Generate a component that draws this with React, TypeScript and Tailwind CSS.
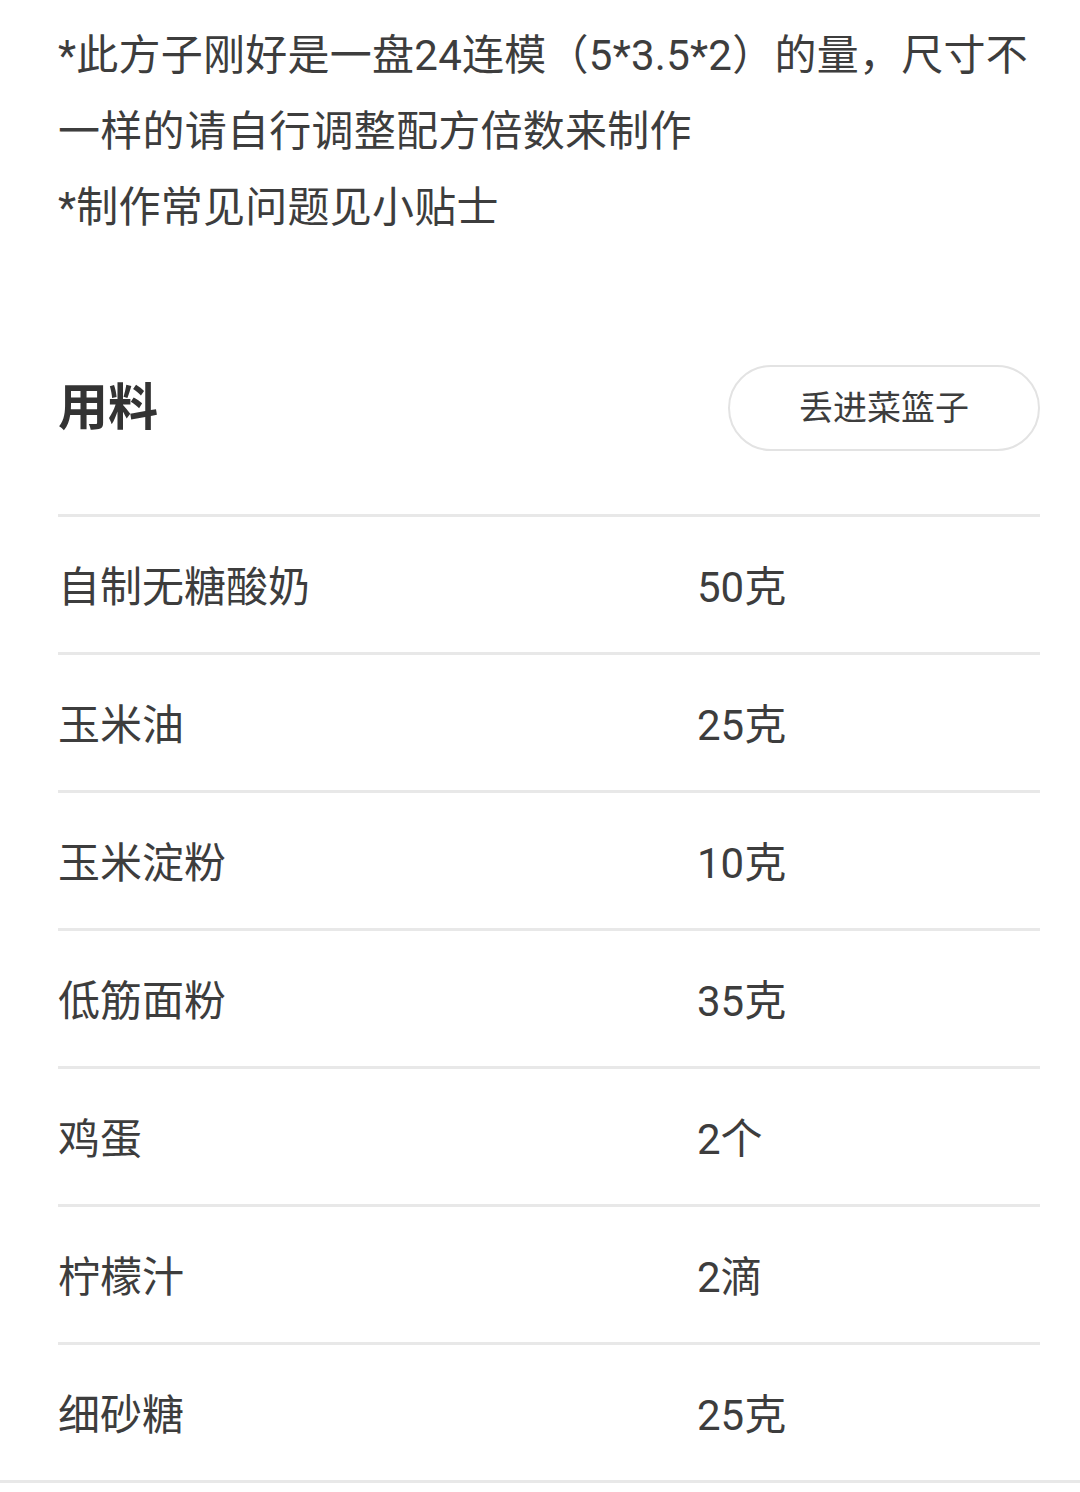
const ingredients = [
  { name: '自制无糖酸奶', amount: '50克' },
  { name: '玉米油', amount: '25克' },
  { name: '玉米淀粉', amount: '10克' },
  { name: '低筋面粉', amount: '35克' },
  { name: '鸡蛋', amount: '2个' },
  { name: '柠檬汁', amount: '2滴' },
  { name: '细砂糖', amount: '25克' },
];

export default function App() {
  return (
    <div
      className="min-h-screen bg-white text-[#3d3d3d]"
      style={{ fontFamily: 'Roboto, "Noto Sans CJK SC", sans-serif' }}
    >
      {/* Intro notes */}
      <section className="pl-[58px] pr-[40px] pt-[18px]">
        <p className="text-[42px] leading-[76px] tracking-[0.25px]">*此方子刚好是一盘24连模（5*3.5*2）的量，尺寸不一样的请自行调整配方倍数来制作</p>
        <p className="text-[42px] leading-[76px] tracking-[0.25px]">*制作常见问题见小贴士</p>
      </section>

      {/* Ingredients header */}
      <section className="mt-[119px] pl-[58px] pr-[40px]">
        <div className="flex items-center justify-between">
          <h2 className="text-[50px] font-bold text-[#333333]">用料</h2>
          <button className="h-[86px] w-[312px] rounded-full border-2 border-[#e3e3e3] bg-white text-[34px] text-[#3d3d3d]">
            丢进菜篮子
          </button>
        </div>

        <div className="mt-[63px] border-t-[3px] border-[#e8e8e8]">
          {ingredients.map((item, i) => (
            <div
              key={item.name}
              className={
                i === ingredients.length - 1
                  ? 'grid h-[135px] grid-cols-[639px_1fr] items-center pt-[6px] text-[42px]'
                  : 'grid h-[138px] grid-cols-[639px_1fr] items-center border-b-[3px] border-[#e8e8e8] pt-[6px] text-[42px]'
              }
            >
              <span>{item.name}</span>
              <span>{item.amount}</span>
            </div>
          ))}
        </div>
      </section>
      <div className="h-[3px] bg-[#e8e8e8]" />
    </div>
  );
}
